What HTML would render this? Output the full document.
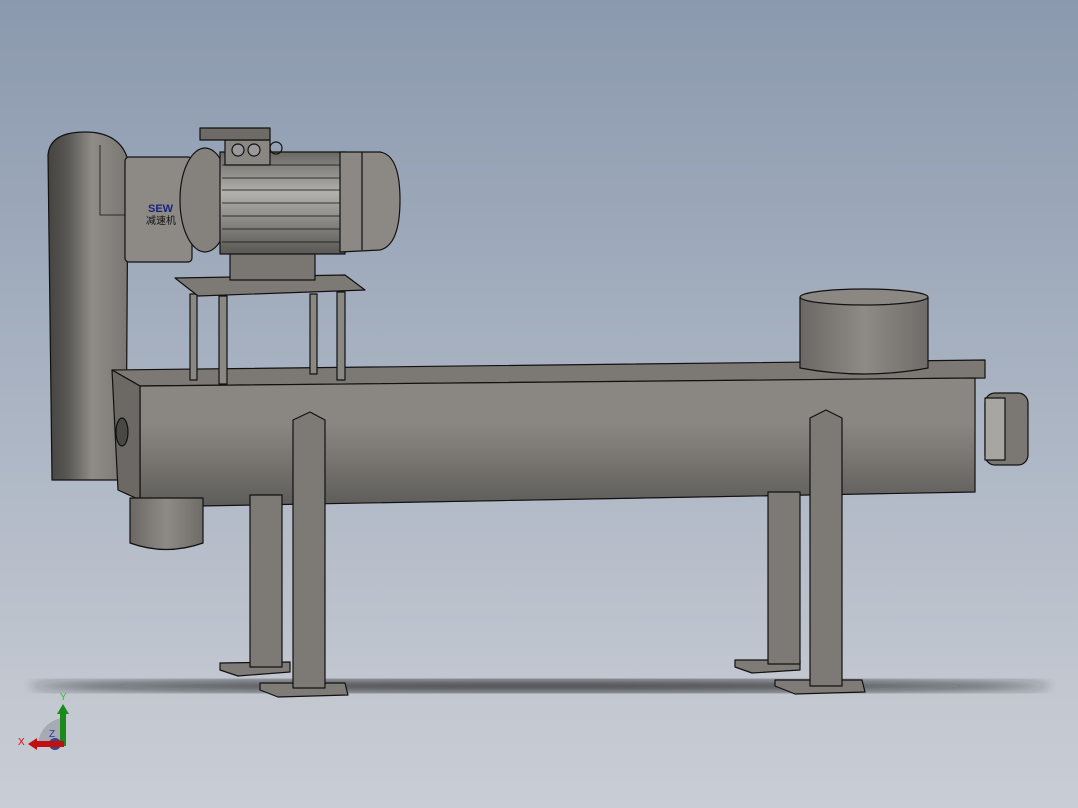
<!DOCTYPE html><html><head><style>html,body{margin:0;padding:0;width:1078px;height:808px;overflow:hidden}</style></head><body>
<svg width="1078" height="808" viewBox="0 0 1078 808" xmlns="http://www.w3.org/2000/svg" font-family="Liberation Sans, sans-serif">
<defs>
<linearGradient id="bg" x1="0" y1="0" x2="0" y2="1"><stop offset="0" stop-color="#8b99ae"/><stop offset="0.5" stop-color="#aab4c3"/><stop offset="0.85" stop-color="#c2c7d0"/><stop offset="1" stop-color="#c9cdd5"/></linearGradient>
<linearGradient id="cyl" x1="0" y1="0" x2="0" y2="1"><stop offset="0" stop-color="#8a8782"/><stop offset="0.35" stop-color="#8a8782"/><stop offset="0.6" stop-color="#7b7873"/><stop offset="1" stop-color="#5e5c59"/></linearGradient>
<linearGradient id="mot" x1="0" y1="0" x2="0" y2="1"><stop offset="0" stop-color="#6a6864"/><stop offset="0.4" stop-color="#b3b1ac"/><stop offset="1" stop-color="#5a5855"/></linearGradient>
<linearGradient id="guard" x1="0" y1="0" x2="1" y2="0"><stop offset="0" stop-color="#454340"/><stop offset="0.25" stop-color="#5a5855"/><stop offset="0.55" stop-color="#8f8c87"/><stop offset="1" stop-color="#7a7773"/></linearGradient>
<linearGradient id="hop" x1="0" y1="0" x2="1" y2="0"><stop offset="0" stop-color="#6b6864"/><stop offset="0.5" stop-color="#8e8b86"/><stop offset="1" stop-color="#6f6c68"/></linearGradient>
<filter id="bl"><feGaussianBlur stdDeviation="5"/></filter>
</defs>
<rect width="1078" height="808" fill="url(#bg)"/>
<ellipse cx="540" cy="686" rx="510" ry="6" fill="#1a1a1a" filter="url(#bl)" opacity="0.8"/>
<g stroke="#111" stroke-width="1.2" stroke-linejoin="round">
<path d="M48 155 Q50 132 85 132 Q120 132 128 160 L126 480 L52 480 Z" fill="url(#guard)"/>
<path d="M100 145 L100 215 L128 215" fill="none" stroke-width="0.8"/>
<path d="M112 370 L985 360 L985 378 L140 386 Z" fill="#7c7975"/>
<path d="M140 386 L975 378 L975 492 Q600 500 200 506 L140 500 Z" fill="url(#cyl)"/>
<path d="M112 370 L140 386 L140 500 L118 490 Z" fill="#6c6965"/>
<ellipse cx="122" cy="432" rx="6" ry="14" fill="#4a4845"/>
<path d="M130 498 L203 498 L203 543 Q166 556 130 543 Z" fill="url(#hop)"/>
<path d="M800 297 L928 297 L928 368 Q864 380 800 368 Z" fill="url(#hop)"/>
<ellipse cx="864" cy="297" rx="64" ry="8" fill="#8b8883"/>
<rect x="985" y="393" width="43" height="72" rx="10" fill="#7b7874"/>
<rect x="985" y="398" width="20" height="62" fill="#a8a6a1"/>
<path d="M220 663 L290 662 L290 672 L238 676 L220 670 Z" fill="#7f7c77"/>
<rect x="250" y="495" width="32" height="172" fill="#7d7a76"/>
<path d="M260 683 L345 683 L348 695 L278 697 L260 690 Z" fill="#7f7c77"/>
<path d="M293 420 L310 412 L325 420 L325 688 L293 688 Z" fill="#7d7a76"/>
<path d="M735 660 L800 660 L800 670 L752 673 L735 667 Z" fill="#7f7c77"/>
<rect x="768" y="492" width="32" height="172" fill="#7d7a76"/>
<path d="M775 680 L862 680 L865 692 L795 694 L775 686 Z" fill="#7f7c77"/>
<path d="M810 418 L826 410 L842 418 L842 686 L810 686 Z" fill="#7d7a76"/>
<rect x="190" y="294" width="7" height="86" fill="#8a8883"/>
<rect x="219" y="296" width="8" height="88" fill="#8a8883"/>
<rect x="310" y="294" width="7" height="80" fill="#8a8883"/>
<rect x="337" y="292" width="8" height="88" fill="#8a8883"/>
<path d="M175 278 L345 275 L365 290 L198 296 Z" fill="#7d7a76"/>
<rect x="125" y="157" width="67" height="105" rx="4" fill="#8d8a85"/>
<text x="148" y="212" font-size="11" font-weight="bold" fill="#1a237e" stroke="none">SEW</text>
<text x="146" y="224" font-size="10" fill="#111" stroke="none" font-family="Liberation Sans, Noto Sans CJK SC, sans-serif">减速机</text>
<rect x="230" y="250" width="85" height="30" fill="#7a7773"/>
<ellipse cx="205" cy="200" rx="25" ry="52" fill="#85827d"/>
<rect x="220" y="152" width="125" height="102" fill="url(#mot)"/>
<g stroke-width="0.8"><path d="M222 165 H340 M222 178 H342 M222 190 H344 M222 203 H344 M222 216 H344 M222 229 H342 M222 242 H340"/></g>
<path d="M340 152 L380 152 Q400 155 400 200 Q400 245 380 250 L340 252 Z" fill="#8c8984"/>
<path d="M362 152 L362 250" fill="none"/>
<rect x="225" y="140" width="45" height="25" fill="#8a8782"/>
<rect x="200" y="128" width="70" height="12" fill="#6e6b67"/>
<circle cx="238" cy="150" r="6" fill="#999"/><circle cx="254" cy="150" r="6" fill="#999"/>
<circle cx="276" cy="148" r="6" fill="none"/>
</g>
<path d="M38 746 A28 28 0 0 1 63 718 L63 746 Z" fill="#9ea2ab" opacity="0.8"/>
<circle cx="55" cy="744" r="6" fill="#3f4380"/>
<rect x="60" y="712" width="6" height="34" fill="#1a8a1a"/>
<path d="M57 714 L63 704 L69 714 Z" fill="#1a8a1a"/>
<rect x="36" y="741" width="28" height="6" fill="#c01010"/>
<path d="M37 738 L28 744 L37 750 Z" fill="#c01010"/>
<text x="60" y="700" font-size="10" fill="#2c2">Y</text>
<text x="18" y="745" font-size="10" fill="#e00">X</text>
<text x="49" y="737" font-size="10" fill="#33a">Z</text>
</svg>
</body></html>
